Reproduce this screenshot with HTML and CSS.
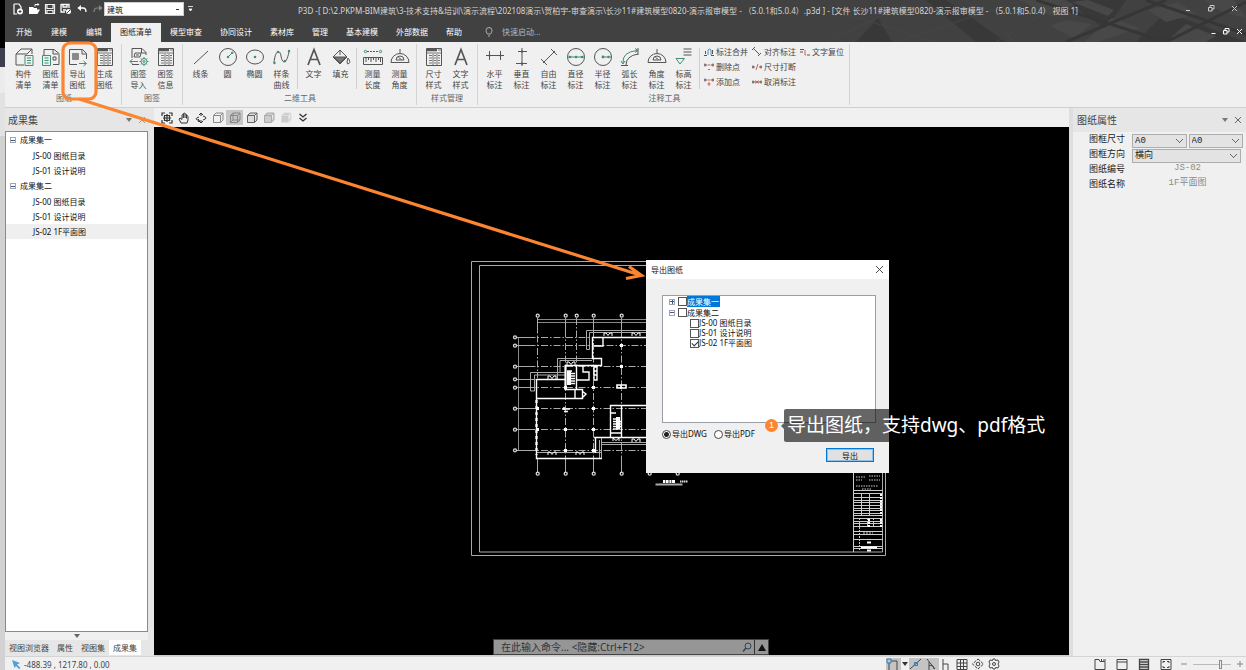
FILE: index.html
```html
<!DOCTYPE html>
<html lang="zh-CN">
<head>
<meta charset="utf-8">
<title>P3D</title>
<link rel="stylesheet" href="styles.css">
</head>
<body>
<div class="edge"></div>
<div class="app">
  <header class="head">
    <svg class="head-art" viewBox="0 0 480 42" preserveAspectRatio="xMaxYMin slice" aria-hidden="true">
      <path fill="#383838" d="M90 42l22-24 14 24zM180 0l60 42h-30L160 0zM300 0h60l-20 30zM370 42l30-30 80 30z"/>
      <path fill="#484848" d="M252 0l34 16 22-12-12-4zM322 0l26 10-6 6-36-14zM300 20l26 4-18 14-24-12zM346 18l28 10-42 14h-14zM382 10l30-8 18 12-30 8zM420 24l30 12-10 6h-40zM438 0h30l12 18-24-6z"/>
      <path fill="none" stroke="#464646" d="M0 42L60 0M60 42L140 4M130 42L250 2M60 8l110 34M200 0l50 42M230 42l70-42"/>
      <path fill="none" stroke="#363636" stroke-width="3" d="M270 0l130 42M300 42L400 0M380 0l100 34M400 42l80-40"/>
    </svg>
    <div class="titlebar">
      <div class="quick">
        <button class="qbtn" aria-label="新建"><svg width="12" height="12" viewBox="0 0 12 12"><path d="M2 1h5l2 3v2M2 1v10h3" fill="none" stroke="#fff" stroke-width="1.2"/><circle cx="8" cy="8.5" r="3" fill="#fff"/><path d="M8 7v3M6.500 8.500h3" stroke="#444"/></svg></button>
        <button class="qbtn" aria-label="打开"><svg width="12" height="12" viewBox="0 0 12 12"><path d="M1 11V4h4l1 1h3v2H4zM4 6.500h8L9.500 11H1z" fill="#fff"/><path d="M7 3.500V1.500h3" stroke="#fff" fill="none"/><path d="M9.500 0l2 1.500-2 1.500z" fill="#fff"/></svg></button>
        <button class="qbtn" aria-label="保存"><svg width="12" height="12" viewBox="0 0 12 12"><path d="M1.500 1.500h9v9h-9zM3 2v3.500h6V2M3 10V7.500h6V10" fill="none" stroke="#eee" stroke-width="1.200"/></svg></button>
        <button class="qbtn" aria-label="另存为"><svg width="12" height="12" viewBox="0 0 12 12"><path d="M1 1.500h8V5M1 1v8h4M3 2v2h4V2M3 7h3" fill="none" stroke="#fff" stroke-width="1.300"/><circle cx="8.500" cy="8.500" r="2.500" fill="#fff"/><path d="M7 10l3-3" stroke="#444"/></svg></button>
        <button class="qbtn" aria-label="撤销"><svg width="12" height="12" viewBox="0 0 12 12"><path d="M2 5h5q3 0 3 4" fill="none" stroke="#fff" stroke-width="1.300"/><path d="M5 2L1.500 5 5 8z" fill="#fff"/></svg></button>
        <button class="qbtn" aria-label="重做"><svg width="12" height="12" viewBox="0 0 12 12"><path d="M10 5H5Q2 5 2 9" fill="none" stroke="#888" stroke-width="1.200"/><path d="M7 2l3.500 3L7 8z" fill="#888"/></svg></button>
        <select class="profile" aria-label="专业"><option>建筑</option></select>
        <svg width="5" height="6" viewBox="0 0 5 6"><path d="M0 .5h5M1 3h3L2.500 5z" stroke="#fff" stroke-width=".8" fill="#fff"/></svg>
      </div>
      <h1 class="doc-title">P3D -[ D:\2.PKPM-BIM建筑\3-技术支持&amp;培训\演示流程\202108演示\贺柏宇-审查演示\长沙11#建筑模型0820-演示报审模型 - （5.0.1和5.0.4）.p3d ] - [文件 长沙11#建筑模型0820-演示报审模型 - （5.0.1和5.0.4） 视图 1]</h1>
      <div class="winbtns wide">
        <button class="wbtn" aria-label="最小化"><svg width="7" height="7" viewBox="0 0 7 7"><path d="M1 5.500h4"/></svg></button>
        <button class="wbtn" aria-label="还原"><svg width="7" height="7" viewBox="0 0 7 7"><path d="M.5 2.500h3.500v3.500H.5zM2 2.500V.5h4v3.500H4"/></svg></button>
        <button class="wbtn" aria-label="关闭"><svg width="7" height="7" viewBox="0 0 7 7"><path d="M1 1l5 5M6 1L1 6"/></svg></button>
      </div>
    </div>
    <nav class="menu">
      <button class="tab">开始</button><button class="tab">建模</button><button class="tab">编辑</button><button class="tab active">图纸清单</button><button class="tab">模型审查</button><button class="tab">协同设计</button><button class="tab">素材库</button><button class="tab">管理</button><button class="tab">基本建模</button><button class="tab">外部数据</button><button class="tab">帮助</button>
      <label class="launch"><svg width="8" height="10" viewBox="0 0 8 10"><path d="M2.500 7Q1 5 1 3.500a3 3 0 0 1 6 0Q7 5 5.500 7zM3 9h2" fill="none" stroke="#bbb" stroke-width=".9"/></svg><input type="text" placeholder="快速启动..." aria-label="快速启动"></label>
      <div class="winbtns bright">
        <button class="wbtn" aria-label="最小化文档"><svg width="7" height="7" viewBox="0 0 7 7"><path d="M1.500 5.500h4"/></svg></button>
        <button class="wbtn" aria-label="还原文档"><svg width="7" height="7" viewBox="0 0 7 7"><path d="M.5 2.500h3.500v3.500H.5zM2 2.500V.5h4v3.500H4"/></svg></button>
        <button class="wbtn" aria-label="关闭文档"><svg width="7" height="7" viewBox="0 0 7 7"><path d="M1 1l5 5M6 1L1 6"/></svg></button>
      </div>
    </nav>
  </header>

  <svg class="defs" aria-hidden="true">
    <symbol id="i-sheet" viewBox="0 0 20 20"><path d="M2.500 1.500h15v17h-15z"/><path d="M3 3h10" stroke-width="2.500"/><path d="M14 3h3M3 6h14M5 8.500h3M5 11h3M5 13.500h3M5 16h3M10 8.500h2M10 11h2M10 13.500h2M10 16h2M14 8.500h2M14 11h2M14 13.500h2M14 16h2M9 7v11M13 7v11" stroke-width=".8"/></symbol>
    <symbol id="i-text" viewBox="0 0 20 20"><path d="M4 18L10 2.500 16 18M6.500 12.500h7" stroke-width="1.700"/></symbol>
    <symbol id="i-angle" viewBox="0 0 20 20"><path d="M1 15.500a9 9 0 0 1 18 0zM6 13a4 4 0 0 1 8 0zM10 2v4M8.500 10.500l3 2"/></symbol>
    <symbol id="i-cube" viewBox="0 0 12 12"><path d="M1.500 3.500h7v7h-7zM1.500 3.500l2.500-2.500h7L8.500 3.500M11 1v7l-2.500 2.500"/></symbol>
  </svg>

  <section class="ribbon">
    <div class="group g-first">
      <div class="tools">
        <button class="tool"><svg viewBox="0 0 20 20"><path d="M10 18H2V7h11M2 7l5-5h11v5M13 7l5-5"/><path class="gr" d="M11 8.500h8v10h-8zM13 11h4M13 13.500h4M13 16h4"/></svg>构件<br>清单</button>
        <button class="tool"><svg viewBox="0 0 20 20"><path d="M3 8V2.500h10l5 4v11h-6M12 3v4h5M12 10h3v3h-3z"/><path class="gr" d="M1.500 8.500h8v10h-8zM3.500 11h4M3.500 13.500h4M3.500 16h4"/></svg>图纸<br>清单</button>
        <button class="tool"><svg viewBox="0 0 20 20"><path d="M9 17.500H1.500v-15h13l4 4V12M14 3v4h4"/><path d="M4.500 6.500h6v6h-6z" fill="#8a8a8a" stroke="#8a8a8a"/><path class="gr" d="M11 16.500h7M15.500 14l3 2.500-3 2.500"/></svg>导出<br>图纸</button>
        <button class="tool"><svg><use href="#i-sheet"/></svg>生成<br>图纸</button>
      </div>
      <div class="caption">图纸</div>
    </div>
    <div class="group">
      <div class="tools">
        <button class="tool"><svg viewBox="0 0 20 20"><path d="M3 11V1.500h10l4 4V8M12.500 2v4H17M5 10l1-4h6l-1 4zM7 8h3M3 17.500h7"/><path class="gr" d="M9 14.500H1M3.500 12L1 14.500 3.500 17"/><circle class="gr" cx="15" cy="14.500" r="3"/><circle class="gr" cx="15" cy="14.500" r="1"/><path class="gr" d="M15 10v1.500M15 17.500V19M10.500 14.500H12M18 14.500h1.500M12 11.500l1 1M17 16.500l1 1M18 11.500l-1 1M13 16.500l-1 1"/></svg>图签<br>导入</button>
        <button class="tool"><svg><use href="#i-sheet"/></svg>图签<br>信息</button>
      </div>
      <div class="caption">图签</div>
    </div>
    <div class="group">
      <div class="tools">
        <button class="tool"><svg viewBox="0 0 20 20"><path d="M3 17L17 4"/></svg>线条</button>
        <button class="tool"><svg viewBox="0 0 20 20"><circle cx="10" cy="10" r="8.500"/><path class="gr" d="M10 10l4-4M13 5.500l2-.5-.5 2"/><circle class="gf" cx="10" cy="10" r="1.200"/></svg>圆</button>
        <button class="tool"><svg viewBox="0 0 20 20"><ellipse cx="10" cy="10" rx="8.500" ry="7"/><circle class="gf" cx="10" cy="10" r="1.300"/></svg>椭圆</button>
        <button class="tool"><svg viewBox="0 0 20 20"><path d="M2 16C3 3 8 2 9 9s5 10 8-4"/><circle class="gf" cx="2.500" cy="16" r="1.200"/><circle class="gf" cx="6" cy="5" r="1.200"/><circle class="gf" cx="13" cy="14" r="1.200"/><circle class="gf" cx="17" cy="4" r="1.200"/></svg>样条<br>曲线</button>
        <i class="bar"></i>
        <button class="tool"><svg><use href="#i-text"/></svg>文字</button>
        <button class="tool"><svg viewBox="0 0 20 20"><path d="M2 10l7-7 7 7-7 7zM9 3V8"/><path d="M3 10h12l-6 6z" fill="#777"/><path d="M17 11q3 4 1 5.500t-2-1.500z"/></svg>填充</button>
        <i class="bar"></i>
        <button class="tool"><svg viewBox="0 0 20 20"><path d="M.5 10.500h19v7H.5zM3 11v4M5.500 11v2M8 11v4M10.500 11v2M13 11v4M15.500 11v2M17.500 11v4"/><path d="M4 4.500h12" stroke-dasharray="2 1"/><circle class="gr" cx="2.500" cy="4.500" r="1.200"/><circle class="gr" cx="17.500" cy="4.500" r="1.200"/></svg>测量<br>长度</button>
        <button class="tool"><svg><use href="#i-angle"/></svg>测量<br>角度</button>
      </div>
      <div class="caption">二维工具</div>
    </div>
    <div class="group">
      <div class="tools">
        <button class="tool"><svg><use href="#i-sheet"/></svg>尺寸<br>样式</button>
        <button class="tool"><svg><use href="#i-text"/></svg>文字<br>样式</button>
      </div>
      <div class="caption">样式管理</div>
    </div>
    <div class="group g-last">
      <div class="tools">
        <button class="tool"><svg viewBox="0 0 20 20"><path d="M1 8.500h18M4.500 4v9M15.500 4v9"/><path d="M3 8.500l1.500-1.500 1.500 1.500-1.500 1.500zM14 8.500l1.500-1.500 1.500 1.500-1.500 1.500z" fill="#555" stroke="none"/></svg>水平<br>标注</button>
        <button class="tool"><svg viewBox="0 0 20 20"><path d="M10 1v18M6 4.500h9M4 16.500h11"/><path d="M8.500 4.500L10 3l1.500 1.500L10 6zM8.500 16.500L10 15l1.500 1.500L10 18z" fill="#555" stroke="none"/></svg>垂直<br>标注</button>
        <button class="tool"><svg viewBox="0 0 20 20"><path d="M4 16L16 4M2 12l6 6M12 2l6 6"/></svg>自由<br>标注</button>
        <button class="tool"><svg viewBox="0 0 20 20"><circle cx="10" cy="10" r="8.500"/><path class="gr" d="M1 10h18"/><circle class="gf" cx="4" cy="10" r="1.300"/><circle class="gf" cx="10" cy="10" r="1.300"/><circle class="gf" cx="16" cy="10" r="1.300"/></svg>直径<br>标注</button>
        <button class="tool"><svg viewBox="0 0 20 20"><circle cx="10" cy="10" r="8.500"/><path class="gr" d="M10 10h8.500"/><circle class="gf" cx="10" cy="10" r="1.400"/><circle class="gf" cx="15.500" cy="10" r="1.200"/></svg>半径<br>标注</button>
        <button class="tool"><svg viewBox="0 0 20 20"><path d="M6 18q0-9 12-11M1 18.500h7M18 1v7"/><path class="gr" d="M3 16Q2 5 17 3.500M1 14l2 3 2-3M15 1.500l3 2-3 2"/></svg>弧长<br>标注</button>
        <button class="tool"><svg><use href="#i-angle"/></svg>角度<br>标注</button>
        <button class="tool"><svg viewBox="0 0 20 20"><path d="M9.500 2h8M9.500 5h8M9.500 8h8"/><path class="gr" d="M2 11.500h8.500L6 17z"/></svg>标高<br>标注</button>
        <i class="bar"></i>
        <div class="minis">
          <button class="mini"><svg viewBox="0 0 10 10"><path d="M0 8.500h3M7 8.500h3M1.500 7v-3M8.500 7V3"/><path stroke="#4a8fc0" d="M4 8V3q1.500-2 3 0v5"/></svg>标注合并</button>
          <button class="mini"><svg viewBox="0 0 10 10"><path d="M2 2l6 6M0 3l3-3M6 9l3-3"/></svg>对齐标注</button>
          <button class="mini"><svg viewBox="0 0 10 10"><path d="M0 2.500h4M0 5h3M7 8h3"/><path class="rd" d="M5 3v5h1"/></svg>文字复位</button>
          <button class="mini"><svg viewBox="0 0 10 10"><path d="M0 3h3M7 3h3M1 1.500v3M9 1.500v3"/><path class="rd" d="M3.500 3h3M4 7l1 1 1-1"/></svg>删除点</button>
          <button class="mini"><svg viewBox="0 0 10 10"><path d="M0 5h3M7 5h3M1 3.500v3M9 3.500v3"/><path class="rd" d="M4 8l2-6"/></svg>尺寸打断</button>
          <span></span>
          <button class="mini"><svg viewBox="0 0 10 10"><path d="M0 3h3M7 3h3M1 1.500v3M9 1.500v3"/><path class="rd" d="M3.500 3h3M5 5v4M3.500 7h3"/></svg>添加点</button>
          <button class="mini"><svg viewBox="0 0 10 10"><path d="M0 5h10M1 3.500v3M9 3.500v3"/><path class="rd" d="M3.500 3.500l3 3M6.500 3.500l-3 3"/></svg>取消标注</button>
        </div>
      </div>
      <div class="caption">注释工具</div>
    </div>
  </section>

  <main class="work">
    <aside class="left">
      <div class="panel-head"><h2>成果集</h2><span class="phb"><svg width="6" height="4" viewBox="0 0 6 4"><path d="M0 0h6L3 4z" fill="#777"/></svg><svg width="6" height="6" viewBox="0 0 6 6"><path d="M0 0l6 6M6 0L0 6" stroke="#999"/></svg></span></div>
      <ul class="tree">
        <li class="parent"><i class="box minus"></i>成果集一</li>
        <li>JS-00 图纸目录</li>
        <li>JS-01 设计说明</li>
        <li class="parent"><i class="box minus"></i>成果集二</li>
        <li>JS-00 图纸目录</li>
        <li>JS-01 设计说明</li>
        <li class="sel">JS-02 1F平面图</li>
      </ul>
      <div class="more"><svg width="6" height="4" viewBox="0 0 6 4"><path d="M0 0h6L3 4z" fill="#666"/></svg></div>
      <div class="dock"><button>视图浏览器</button><button>属性</button><button>视图集</button><button class="on">成果集</button></div>
    </aside>

    <section class="center">
      <div class="viewbar">
        <button aria-label="全图"><svg viewBox="0 0 12 12"><path d="M1 4V1h3M8 1h3v3M11 8v3H8M4 11H1V8M6 2v8M2 6h8M3.500 3.500h5v5h-5z" stroke-width="1.200"/></svg></button>
        <button aria-label="平移"><svg viewBox="0 0 12 12"><path d="M3 11L1 7l1-1 2 1.500V3q.7-1 1.400 0V1.500q.8-1 1.600 0V2.500q.8-1 1.500 0V4q1-.7 1.500.3V8L9 11zM5.400 3v3M7 2.500V6M8.500 4v2.500"/></svg></button>
        <button aria-label="旋转"><svg viewBox="0 0 12 12"><path d="M4 5q-6 2 0 3.500M8 4q6 2 0 4M4 3l2-2 2 2M4 9l2 2 2-2M6 1v3M6 8v3M3 7l1.500 1.500L3 10"/></svg></button>
        <button aria-label="线框"><svg class="c1"><use href="#i-cube"/></svg></button>
        <button class="on" aria-label="消隐"><svg class="c2" viewBox="0 0 12 12"><path d="M1.500 3.500h7v7h-7zM1.500 3.500l2.500-2.500h7L8.500 3.500M11 1v7l-2.500 2.500M4 1v7h7M4 8l-2.500 2.500"/></svg></button>
        <button aria-label="着色"><svg class="c3"><use href="#i-cube"/></svg></button>
        <button aria-label="着色带边"><svg class="c4"><use href="#i-cube"/></svg></button>
        <button aria-label="真实"><svg class="c5"><use href="#i-cube"/></svg></button>
        <button aria-label="更多"><svg viewBox="0 0 12 12"><path d="M2.500 2l3.500 3L9.500 2M2.500 6l3.500 3L9.500 6" stroke-width="1.300"/></svg></button>
      </div>
      <div class="canvas">
        <svg class="plan" width="740" height="440" viewBox="154 127 740 440" aria-hidden="true">
          <g fill="none" stroke="#aaa" stroke-width="1">
            <path d="M471.500 261.500h414v294h-414zM479.500 265.500h403v286.500h-403z"/>
            <path d="M537 319.500h110M537 322.500h110M518.500 337v113" stroke="#888"/>
            <path stroke-dasharray="7 2 1.500 2" d="M537.500 323v55M565.500 318v155M576.500 318v50M593.500 318v155M621.500 318v155M516 337.500h75M516 345.500h75M594 345.500h52M516 366.500h130M516 379.500h20M516 387.500h130M516 408.500h130M516 429.500h130M516 450.500h130"/>
            <path d="M537.500 318v14M565.500 318v14M593.500 318v14M621.500 318v14M517 337.500h15M517 345.500h15M517 366.500h15M517 379.500h15M517 387.500h15M517 408.500h15M517 429.500h15M517 450.500h15M537.500 459v13M565.500 459v13M593.500 459v13M621.500 459v13"/>
            <path d="M647 330.500h-60.500v19h3v-17H647M592 358.500h-34.500V379M592 360.500h-32V372M565 372.500h-34.500v18.500h4v-16H565M594 437.500h52M602 442.500h44M602 444.500h44M601.500 438v20M599.500 440v18M536 452.500h66"/>
          </g>
          <g fill="#000" stroke="#ddd" stroke-width="1.300">
            <circle cx="537.700" cy="315.700" r="1.500"/><circle cx="565.700" cy="315.700" r="1.500"/><circle cx="576.700" cy="315.700" r="1.500"/><circle cx="593.700" cy="315.700" r="1.500"/><circle cx="621.700" cy="315.700" r="1.500"/>
            <circle cx="515" cy="337.300" r="1.500"/><circle cx="515" cy="345.700" r="1.500"/><circle cx="515" cy="366.700" r="1.500"/><circle cx="515" cy="379.300" r="1.500"/><circle cx="515" cy="387.700" r="1.500"/><circle cx="515" cy="408.700" r="1.500"/><circle cx="515" cy="429.700" r="1.500"/><circle cx="515" cy="450.300" r="1.500"/>
            <circle cx="537.700" cy="473.700" r="1.500"/><circle cx="565.700" cy="473.700" r="1.500"/><circle cx="593.700" cy="473.700" r="1.500"/><circle cx="621.700" cy="473.700" r="1.500"/><circle cx="649.700" cy="473.700" r="1.500"/><circle cx="677.700" cy="473.700" r="1.500"/>
          </g>
          <g fill="none" stroke="#fff" stroke-width="1.400">
            <path d="M646 337.500h-53.500v21M603 338v8h-9M592 358.500h9.500v7h-36v24h17v9h-46M576.500 366v23M575 390v8M565 379.500h-28.500v79h65.500M583 366v6h6v8h-12M582 391l4 3-4 4M595.500 437v16M610.500 437v-31.500H646M621.500 406v31M594 437.500h52M611 413h5M611 433h10M597 367h-3v13h3zM594 371h3M594 375h3"/>
            <path d="M565.500 365v25" stroke-width="2"/>
            <path d="M536.500 400v55" stroke-width="2.200" stroke-dasharray="3 3"/>
            <path d="M562 409h8M564 411.500h4M564 407v3M617 388h9v-3h-9zM621 385v4" stroke-width="1.600"/>
            <path d="M548 379v-3h2l2 2.500 2-2.500h2v3M567 365v-3h2l2 2.500 2-2.500h2v3M604 336v-3h2l2 2.500 2-2.500h2v3M632 336v-3h2l2 2.500 2-2.500h2v3M548 455v-3h2l2 2.500 2-2.500h2v3M576 455v-3h2l2 2.500 2-2.500h2v3M632 442v-3h2l2 2.500 2-2.500h2v3M613 441v-3l3 2.500 3-2.500v3" stroke-width="1"/>
            <path d="M567 371h5M567 373.500h8M567 376h8M567 378.500h8M567 381h8M567 383.500h8M613 419h4M613 421.500h8M613 424h8M613 426.500h8M613 429h5" stroke-width="1.500"/>
          </g>
          <path fill="#fff" d="M567 371h4v14h-4zM616 417h4v12h-4zM564 386h3v3h-3zM592 386h3v3h-3zM592 407h3v3h-3zM592 428h3v3h-3zM620 344h3v3h-3zM620 365h3v3h-3zM564 428h3v3h-3zM592 449h3v3h-3zM564 449h3v3h-3zM536 407h3v3h-3zM536 428h3v3h-3z"/>
          <g fill="none" stroke="#ccc">
            <path d="M655.500 484.500h27" stroke-width="2" stroke="#aaa"/>
            <path d="M663 481.500h12" stroke="#fff" stroke-width="3" stroke-dasharray="2 .6 3 .8"/>
            <path d="M680 481.500h8" stroke="#ddd" stroke-width="2" stroke-dasharray="1 .5 2 .5"/>
            <path d="M853.500 472v80M854 490.500h29M854 493.500h29M854 497.500h29M854 500.500h29M854 502.500h29M854 505.500h29M854 508.500h29M854 510.500h29M854 513.500h29M854 515.500h29M854 518.500h29M854 521.500h29M854 523.500h29M854 526.500h29M854 531.500h29M854 534.500h29M854 539.500h29M854 546.500h29M854 548.500h29M861.500 494v22M869.500 494v22"/>
            <path d="M859.500 518v33M867.500 518v9M873.500 518v9M863 533h10" stroke-dasharray="2 1"/>
            <path d="M881 494v22M869 519v8M881 519v8" stroke="#fff" stroke-width="2" stroke-dasharray="2 1"/>
            <path d="M867 542.500h4M861 547.500h16M867 550.500h4" stroke="#fff" stroke-width="2"/>
            <path d="M856 477h9M869 476h11M856 480h6M869 480h11M856 486h22M862 489h10" stroke="#666" stroke-dasharray="1.500 1" stroke-width="2"/>
          </g>
        </svg>

        <div class="dialog" role="dialog" aria-label="导出图纸">
          <div class="dlg-head"><h2>导出图纸</h2><button aria-label="关闭"><svg width="7" height="7" viewBox="0 0 7 7"><path d="M0 0l7 7M7 0L0 7" stroke="#333" stroke-width=".9"/></svg></button></div>
          <form class="dlg-body">
            <ul class="checks">
              <li class="parent"><i class="box plus"></i><label><input type="checkbox"><span class="hl">成果集一</span></label></li>
              <li class="parent"><i class="box minus"></i><label><input type="checkbox"><span>成果集二</span></label></li>
              <li><label><input type="checkbox"><span>JS-00 图纸目录</span></label></li>
              <li><label><input type="checkbox"><span>JS-01 设计说明</span></label></li>
              <li><label><input type="checkbox" checked><span>JS-02 1F平面图</span></label></li>
            </ul>
            <div class="formats">
              <label><input type="radio" name="fmt" checked>导出DWG</label>
              <label><input type="radio" name="fmt">导出PDF</label>
            </div>
            <div class="actions"><button type="button" class="export">导出</button></div>
          </form>
        </div>

        <div class="command">
          <input type="text" placeholder="在此输入命令... &lt;隐藏:Ctrl+F12&gt;" aria-label="命令">
          <svg width="10" height="10" viewBox="0 0 10 10"><circle cx="6" cy="4" r="3" fill="none" stroke="#345"/><path d="M4 6L1 9.500" stroke="#345" stroke-width="1.500"/></svg>
          <button aria-label="展开"><svg width="8" height="7" viewBox="0 0 8 7"><path d="M4 0l4 7H0z" fill="#111"/></svg></button>
        </div>
      </div>
    </section>

    <aside class="right">
      <div class="panel-head"><h2>图纸属性</h2><span class="phb"><svg width="6" height="4" viewBox="0 0 6 4"><path d="M0 0h6L3 4z" fill="#777"/></svg><svg width="6" height="6" viewBox="0 0 6 6"><path d="M0 0l6 6M6 0L0 6" stroke="#666"/></svg></span></div>
      <div class="props">
        <label for="size">图框尺寸</label>
        <div class="pair"><select id="size"><option>A0</option></select><select aria-label="图框尺寸 2"><option>A0</option></select></div>
        <label for="dir">图框方向</label>
        <div class="pair one"><select id="dir"><option>横向</option></select></div>
        <span>图纸编号</span><output>JS-02</output>
        <span>图纸名称</span><output>1F平面图</output>
      </div>
    </aside>
  </main>

  <footer class="status">
    <svg width="9" height="9" viewBox="0 0 9 9"><path d="M0 0l8 3-3 1.500L8.500 8 7 9 4 6 2.500 8z" fill="#4f9fd8"/></svg>
    <span>-488.39 , 1217.80 , 0.00</span>
    <div class="snaps">
      <button class="on" aria-label="捕捉"><svg viewBox="0 0 14 12"><path d="M5 3h6v9M3 5v7"/><path stroke="#2f80c0" d="M1 1h4v4H1z"/></svg></button>
      <svg class="drop" width="6" height="4" viewBox="0 0 6 4"><path d="M0 0h6L3 4z" fill="#333"/></svg>
      <button class="on" aria-label="极轴"><svg viewBox="0 0 14 12"><path d="M1 11L12 1"/><path stroke="#2f80c0" d="M5.500 4.500h3v3h-3z"/></svg></button>
      <button class="on" aria-label="角度捕捉"><svg viewBox="0 0 14 12"><path d="M3 1l8 10M5 4v8M5 8q4-2 5 3"/></svg></button>
      <button aria-label="正交"><svg viewBox="0 0 14 12"><path d="M4 1v11M4 6h5v6"/></svg></button>
      <button aria-label="栅格"><svg viewBox="0 0 14 12"><path d="M2 1.500h10v10H2zM5.500 1v11M8.500 1v11M2 5h10M2 8.500h10"/></svg></button>
      <button aria-label="显示"><svg viewBox="0 0 14 12"><path d="M7 1l5.500 5L7 11 1.500 6z" stroke-dasharray="3 1"/><circle cx="7" cy="6" r="1.800"/></svg></button>
      <button aria-label="设置"><svg viewBox="0 0 14 12"><circle cx="7" cy="6" r="1.500"/><path d="M6 1h2l.5 1.500L11 2l1 2-1 2 1 2-1 2-2.500-.5L8 11H6l-.5-1.500L3 10 2 8l1-2-1-2 1-2 2.500.5z"/></svg></button>
    </div>
    <div class="views">
      <button aria-label="新窗口"><svg viewBox="0 0 12 12"><path d="M1 11.500v-10h4l1 2h5v8zM7.500 1v2M9 2h3"/></svg></button>
      <button aria-label="单窗口"><svg viewBox="0 0 12 12"><path d="M1 1.500h10v10H1zM1 4h10"/></svg></button>
      <button aria-label="列表"><svg viewBox="0 0 12 12"><path d="M1.500 1.500h9v10h-9zM1 4h10M1 6.500h10M1 9h10" stroke-width="1.300"/></svg></button>
      <button aria-label="全屏"><svg viewBox="0 0 12 12"><path d="M1 1.500h10v10H1zM3 5V3.500h2M7 3.500h2V5M9 8v1.500H7M5 9.500H3V8"/></svg></button>
    </div>
    <div class="zoom"><svg width="6" height="6" viewBox="0 0 6 6"><path d="M0 3h6"/></svg><input type="range" value="75" aria-label="缩放"><svg width="6" height="6" viewBox="0 0 6 6"><path d="M0 3h6M3 0v6"/></svg></div>
  </footer>
</div>

<svg class="marker" width="600" height="250" viewBox="55 35 600 250" aria-hidden="true">
  <g fill="none" stroke="#fb8530" stroke-width="3.200"><rect x="63" y="43" width="33" height="56" rx="7"/><path d="M79 99L640 275M629 266.500l12.500 9-15.500 3"/></g>
</svg>
<div class="note"><span class="num">1</span><p>导出图纸，支持dwg、pdf格式</p></div>
</body>
</html>
```

FILE: styles.css
```css
* { box-sizing: border-box; }
body {
  margin: 0;
  height: 100vh;
  display: flex;
  overflow: hidden;
  position: relative;
  font: 8px/11px "Noto Sans", "Noto Sans CJK SC", sans-serif;
  color: #333;
  background: #f0f0f0;
}
button, select, input, output { font: inherit; color: inherit; margin: 0; }
button { border: 0; padding: 0; background: none; }
h1, h2, p, ul { margin: 0; padding: 0; font-weight: 400; }
ul { list-style: none; }
svg { flex: none; }
.defs { display: none; }

.edge {
  width: 5px;
  background: linear-gradient(#000 48px, #3c3f4e 48px 67px, #ececec 67px 93px, #e2e2e2 93px 136px, #d2d2d2 136px);
}
.app { flex: 1; min-width: 0; display: flex; flex-direction: column; }

/* title bar and menu */
.head { position: relative; background: #414141; color: #ddd; }
.head-art { position: absolute; right: 0; top: 0; width: 480px; height: 100%; }
.titlebar { position: relative; display: flex; align-items: center; height: 22px; padding-bottom: 4px; }
.quick { display: flex; align-items: center; gap: 4px; padding-left: 7px; width: 293px; }
.qbtn { width: 12px; height: 12px; }
.qbtn:nth-of-type(-n+3) { margin-right: 0; }
.qbtn svg { display: block; }
select { appearance: none; border-radius: 0; }
.profile {
  width: 80px;
  height: 14px;
  margin-left: -4px;
  border: 1px solid #ccc;
  padding: 0 2px;
  line-height: 11px;
  color: #111;
  background: linear-gradient(#333, #333) right 4px center / 3px 1px no-repeat #fff;
}
.doc-title { flex: 1; padding-top: 2px; font-size: 8px; line-height: 11px; white-space: nowrap; color: #d6d6d6; }
.winbtns { display: flex; gap: 6px; margin-left: auto; padding-right: 3px; }
.winbtns.wide { gap: 16px; padding: 0 8px 2px 0; }
.wbtn { width: 7px; height: 7px; }
.wbtn svg { display: block; fill: none; stroke: #ccc; }
.bright .wbtn svg { stroke: #fff; }
.menu { position: relative; display: flex; align-items: center; padding: 0 0 1px 2px; height: 20px; }
.tab { padding: 0 9px; height: 18px; color: #fff; }
.tab:nth-child(-n+2) { margin-right: 1px; }
.tab.active { background: #f0f0f0; color: #222; height: 19px; margin: 0 0 -1px; padding-bottom: 1px; }
.launch { display: flex; align-items: center; gap: 9px; padding-left: 14px; }
.launch input { width: 90px; border: 0; padding: 0; background: none; }
.launch input::placeholder { color: #b8b8b8; opacity: 1; }

/* ribbon */
.ribbon { display: flex; height: 66px; background: #f0f0f0; border-bottom: 1px solid #cfcfcf; padding: 2px 0; }
.group { display: flex; flex-direction: column; padding: 3px 3px 0; border-right: 1px solid #d4d4d4; }
.g-first { padding-left: 5px; }
.g-first + .group + .group { padding-left: 4px; }
.g-last { padding-right: 1px; }
.tools { display: flex; align-items: flex-start; height: 44px; }
.tool { width: 27px; text-align: center; white-space: nowrap; color: #444; }
.tool svg { display: block; width: 20px; height: 20px; margin: 0 auto 1px; }
.tool svg, .mini svg { fill: none; stroke: #555; }
.gr { stroke: #3f8f78; fill: none; }
.gf { stroke: none; fill: #3f8f78; }
.rd { stroke: #e05a48; }
.bar { width: 1px; height: 41px; margin: 1px 2px 0; background: #d0d0d0; }
.minis { display: grid; grid-template-columns: repeat(3, 48px); grid-auto-rows: 15px; padding-left: 2px; margin-top: -3px; }
.mini { display: flex; align-items: center; gap: 2px; white-space: nowrap; color: #444; }
.mini svg { width: 10px; height: 10px; }
.caption { text-align: center; color: #666; padding-top: 1px; line-height: 12px; }

/* work area */
.work { flex: 1; min-height: 0; display: flex; }
.left { width: 149px; display: flex; flex-direction: column; background: #e6e6e6; padding: 0 6px 1px 0; }
.panel-head { display: flex; align-items: center; justify-content: space-between; height: 24px; padding: 0 3px; color: #444; }
.left .panel-head { height: 23px; }
.panel-head h2 { font-size: 10px; line-height: 14px; }
.phb { display: flex; align-items: center; gap: 7px; }
.tree { flex: 1; background: #fff; border: 1px solid #8a8a8a; color: #111; }
.tree li { line-height: 15px; padding-left: 27px; }
.tree li.parent { line-height: 16px; padding-left: 4px; display: flex; align-items: center; gap: 4px; }
.tree .sel { background: #efefef; }
.box {
  width: 6px;
  height: 6px;
  flex: none;
  border: 1px solid #a5a5a5;
  background: linear-gradient(#345a9a, #345a9a) center / 4px 1px no-repeat #fff;
}
.box.plus { background: linear-gradient(#345a9a, #345a9a) center / 4px 1px no-repeat, linear-gradient(#345a9a, #345a9a) center / 1px 4px no-repeat, #fff; }
.more { height: 8px; background: #f0f0f0; display: flex; align-items: center; justify-content: center; }
.dock { display: flex; height: 15px; }
.dock button { padding: 0 4px; color: #444; }
.dock .on { background: #fff; }

.center { flex: 1; min-width: 0; display: flex; flex-direction: column; }
.viewbar { display: flex; align-items: center; height: 19px; padding-left: 4px; background: #f0f0f0; }
.viewbar button { width: 17px; height: 15px; display: flex; align-items: center; justify-content: center; }
.viewbar .on { background: #c6c6c6; }
.viewbar svg { width: 12px; height: 12px; fill: none; stroke: #333; }
.viewbar .c1, .viewbar .c2 { stroke: #888; }
.viewbar .c3 { stroke: #666; fill: #ddd; }
.viewbar .c4 { stroke: #aaa; fill: #ccc; }
.viewbar .c5 { stroke: #ddd; fill: #ccc; }
.canvas { flex: 1; min-height: 0; position: relative; overflow: hidden; background: #000; border-bottom: 1px solid #ccc; }
.plan { position: absolute; left: 0; top: 0; }

.command {
  position: absolute;
  left: 339px;
  bottom: 0;
  width: 276px;
  height: 16px;
  display: flex;
  align-items: center;
  background: #969696;
  border: 1px solid #444;
  padding-left: 7px;
  gap: 2px;
}
.command input { flex: 1; min-width: 0; border: 0; padding: 0; background: none; font-size: 10px; line-height: 13px; }
.command input::placeholder { color: #333; opacity: 1; }
.command button { width: 14px; height: 14px; border-left: 1px solid #333; display: flex; align-items: center; justify-content: center; }

/* export dialog */
.dialog { position: absolute; left: 492px; top: 133px; width: 243px; background: #f0f0f0; color: #111; }
.dlg-head { display: flex; align-items: center; justify-content: space-between; height: 19px; padding: 0 6px 0 5px; background: #fff; }
.dlg-head h2 { font-size: 8px; }
.dlg-head button svg { display: block; }
.dlg-body { padding: 16px 13px 11px 16px; }
.checks { height: 128px; background: #fff; border: 1px solid #9a9ea8; }
.checks li { line-height: 10px; padding-left: 27px; display: flex; }
.checks .parent { line-height: 11px; padding-left: 6px; gap: 3px; align-items: center; }
.checks label { display: flex; align-items: center; }
.hl { background: #0078d7; color: #fff; padding-right: 1px; }
input[type="checkbox"] { appearance: none; flex: none; width: 9px; height: 9px; border: 1px solid #555; background: #fff; position: relative; }
input[type="checkbox"]:checked::after {
  content: "";
  position: absolute;
  left: 2px;
  top: 0;
  width: 3px;
  height: 5px;
  border: solid #333;
  border-width: 0 1px 1px 0;
  transform: rotate(45deg);
}
.formats { display: flex; gap: 7px; padding-top: 5px; }
.formats label { display: flex; align-items: center; gap: 1px; line-height: 12px; }
input[type="radio"] { appearance: none; width: 9px; height: 9px; border: 1px solid #444; border-radius: 50%; background: #fff; }
input[type="radio"]:checked { background: radial-gradient(#222 2px, #fff 3px); }
.actions { display: flex; justify-content: flex-end; padding: 8px 2px 0 0; }
.export { width: 48px; height: 14px; border: 1px solid #0078d7; background: #e1e1e1; outline: 1px solid #8cc0ea; outline-offset: -2px; }

/* properties */
.right { width: 177px; background: #f0f0f0; border-left: 4px solid #dedede; }
.right .panel-head { background: #e6e6e6; padding: 0 5px 0 4px; }
.props { display: grid; grid-template-columns: 36px 1fr; column-gap: 7px; grid-auto-rows: 15px; align-items: start; padding: 0 3px 0 16px; font-size: 9px; line-height: 13px; color: #222; }
.pair { display: flex; gap: 2px; padding-top: 2px; }
.pair.one { padding-right: 2px; }
.props select {
  flex: 1;
  min-width: 0;
  height: 14px;
  border: 1px solid #adadad;
  padding: 0 2px;
  font: 9px/12px "Liberation Mono", "Noto Sans CJK SC", monospace;
  background: linear-gradient(-45deg, transparent 45%, #666 45% 60%, transparent 60%) right 3px center / 4px 4px no-repeat, linear-gradient(45deg, transparent 45%, #666 45% 60%, transparent 60%) right 6px center / 4px 4px no-repeat, #e3e3e3;
}
.props output { text-align: center; color: #8a8a8a; font: 9px/13px "Liberation Mono", "Noto Sans CJK SC", monospace; }

/* status bar */
.status { height: 14px; display: flex; align-items: center; padding: 1px 3px 0 7px; background: #f0f0f0; border-top: 1px solid #d4d4d4; color: #444; overflow: hidden; }
.status > span { margin-left: 3px; white-space: pre; width: 125px; }
.status svg { fill: none; stroke: #444; }
.status > svg, .status .drop { stroke: none; }
.snaps { display: flex; align-items: center; margin-left: auto; }
.snaps button { width: 15px; height: 12px; }
.snaps button:nth-of-type(n+5) { margin-left: 1px; }
.snaps .drop { margin: 0 1px; }
.snaps .on { background: #c4c4c4; }
.snaps button svg { display: block; width: 14px; height: 12px; }
.views { display: flex; gap: 10px; margin-left: 92px; }
.views button { width: 12px; height: 12px; }
.views svg { display: block; width: 12px; height: 12px; }
.zoom { display: flex; align-items: center; gap: 6px; margin-left: 9px; }
.status .zoom svg { stroke: #888; }
.zoom input { appearance: none; width: 38px; height: 10px; background: linear-gradient(#bbb, #bbb) center / 100% 1px no-repeat; }
.zoom input::-webkit-slider-thumb { appearance: none; width: 3px; height: 9px; border: 1px solid #888; background: #f0f0f0; }

/* annotations over the window */
.marker { position: absolute; left: 55px; top: 35px; pointer-events: none; }
.note { position: absolute; left: 765px; top: 409px; display: flex; align-items: center; }
.num { width: 13px; height: 13px; border-radius: 50%; background: #fb8530; color: #fff; text-align: center; font: 9px/13px "Liberation Sans", sans-serif; }
.note p {
  position: relative;
  margin-left: 6px;
  padding: 0 3px;
  border-radius: 2px;
  background: rgba(0, 0, 0, .6);
  color: #fff;
  font-size: 19px;
  line-height: 33px;
  white-space: nowrap;
}
.note p::before { content: ""; position: absolute; left: -3px; top: 14px; border: solid transparent; border-width: 3px 3px 3px 0; border-right-color: #606060; }
```
